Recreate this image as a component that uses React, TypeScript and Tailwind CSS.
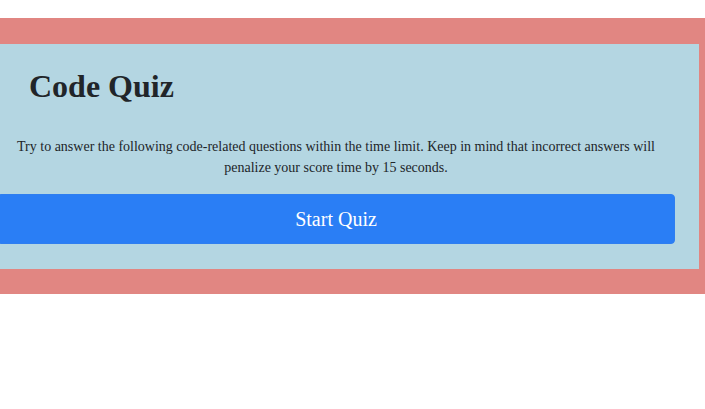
export default function App() {
  return (
    <div className="w-[705px] h-[409px] overflow-hidden bg-white" style={{ fontFamily: '"Liberation Serif", "Times New Roman", serif' }}>
      <div className="mt-[18px] ml-[-33px] w-[738px] bg-[#e18682] pt-[26px] pb-[25px] px-[6px]">
        <div className="bg-[#b4d6e2] pt-[24px] pb-[25px]">
          <h1 className="pl-[56px] text-[32px] leading-[36px] font-bold text-[#212529]">Code Quiz</h1>
          <p className="mt-[32px] text-center text-[14px] leading-[21px] text-[#212529] px-[30px]">
            Try to answer the following code-related questions within the time limit. Keep in mind that incorrect answers will penalize your score time by 15 seconds.
          </p>
          <div className="mt-[16px] px-[24px]">
            <button className="w-full h-[50px] rounded-[4px] bg-[#2a7ef5] border border-[#2f7ef0] text-white text-[20px] leading-[24px]">
              Start Quiz
            </button>
          </div>
        </div>
      </div>
    </div>
  );
}
